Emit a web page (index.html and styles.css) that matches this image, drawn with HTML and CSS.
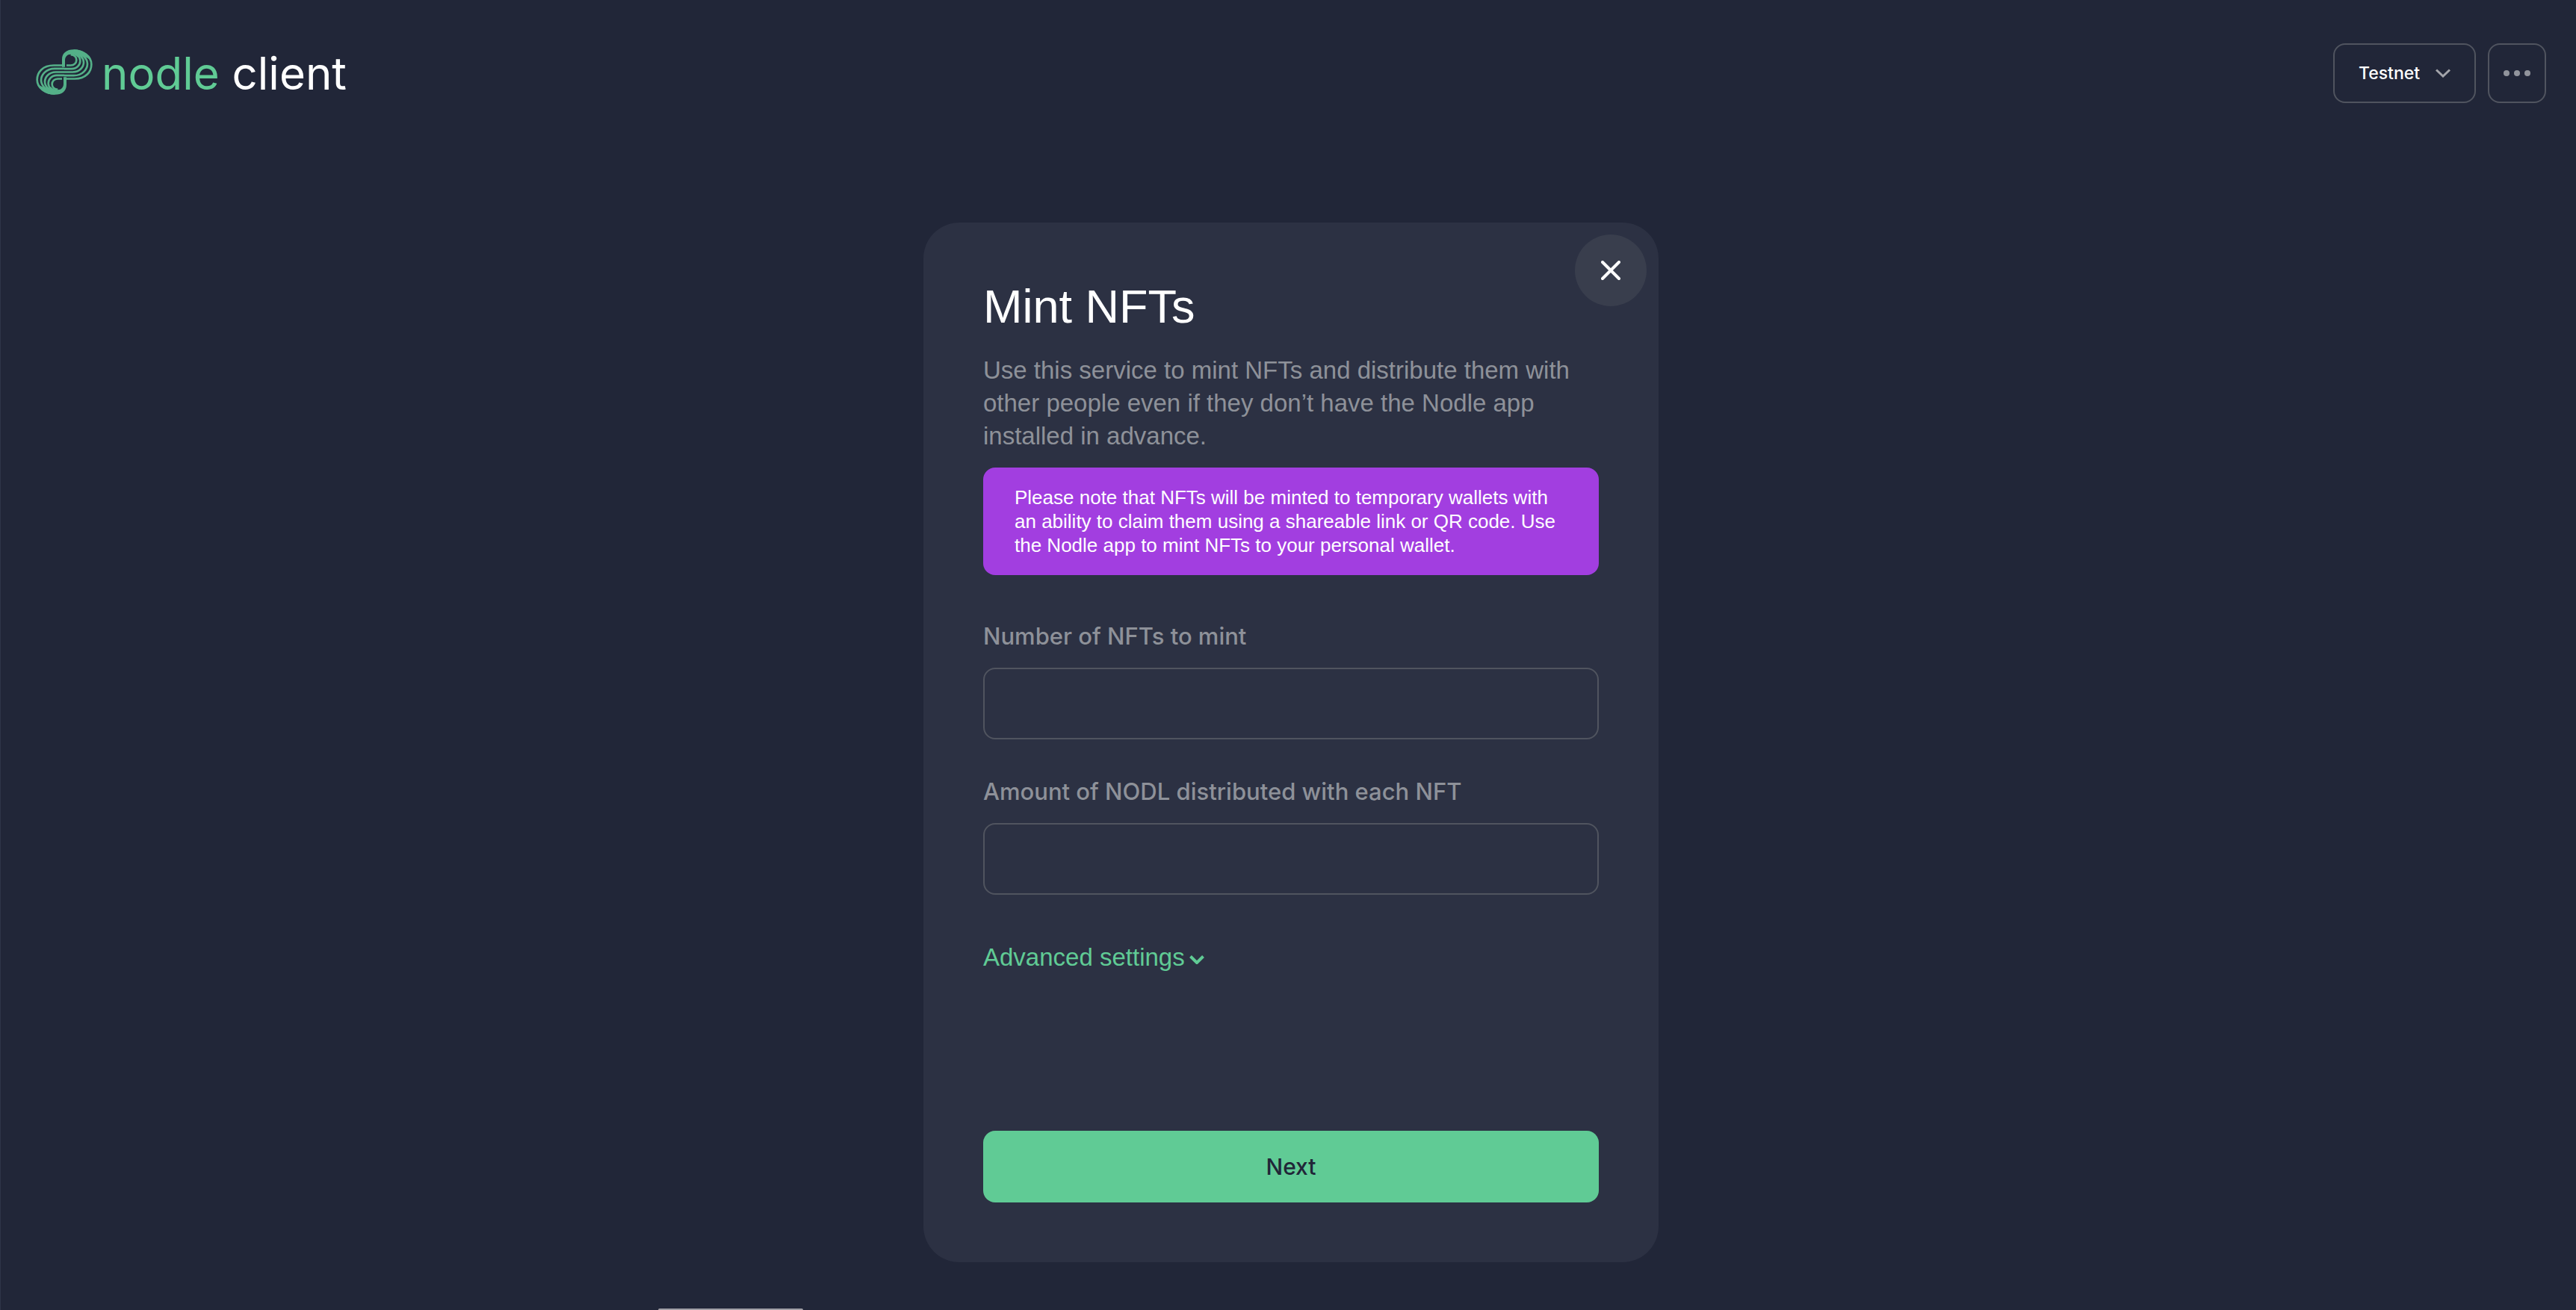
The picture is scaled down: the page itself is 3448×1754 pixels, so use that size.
FILE: index.html
```
<!DOCTYPE html>
<html lang="en">
<head>
<meta charset="utf-8">
<meta name="viewport" content="width=device-width, initial-scale=1">
<title>Nodle Client – Mint NFTs</title>
<link rel="stylesheet" href="styles.css">
</head>
<body>
<header class="header">
  <a class="brand" href="#">
    <svg class="brand-mark" viewBox="54 46 228 182" aria-hidden="true">
      <defs>
        <g id="loop">
          <path fill="currentColor" d="M159 117V86C159 60 178 46 206 46C242 46 268 66 276 92C262 78 242 68 222 78C214 70 206 66 194 66C180 66 171 76 171 90V117Z"/>
          <g fill="none" stroke="currentColor" stroke-width="8">
            <path d="M177 110H194C208 110 217 100 217 88C217 76 207 68 194 67"/>
            <path d="M168 124H198C220 124 232 107 232 92C232 77 218 62 200 58"/>
            <path d="M168 137H202C230 137 246 116 246 98C246 80 227 60 205 55"/>
            <path d="M168 151H206C243 151 261 124 261 104C261 82 237 60 208 52"/>
            <path d="M177 164H210C255 164 277 136 277 106C277 72 242 50 206 50"/>
          </g>
        </g>
      </defs>
      <use href="#loop"/>
      <use href="#loop" transform="rotate(180 168 137)"/>
    </svg>
    <span class="brand-name">nodle <span class="brand-product">client</span></span>
  </a>
  <div class="toolbar">
    <div class="network">
      <select class="network-select" aria-label="Network">
        <option>Testnet</option>
      </select>
      <svg class="network-chevron" viewBox="0 0 20 12" aria-hidden="true"><path d="M1 1.500L10 10L19 1.500" fill="none" stroke="currentColor" stroke-width="3"/></svg>
    </div>
    <button class="more" type="button" aria-label="More options">
      <svg class="more-icon" viewBox="0 0 36 8" aria-hidden="true"><g fill="currentColor"><circle cx="4" cy="4" r="4"/><circle cx="18" cy="4" r="4"/><circle cx="32" cy="4" r="4"/></g></svg>
    </button>
  </div>
</header>
<main class="main">
  <form class="card">
    <button class="close" type="button" aria-label="Close">
      <svg class="close-icon" viewBox="0 0 26 26" aria-hidden="true"><path d="M2 2L24 24M24 2L2 24" stroke="currentColor" stroke-width="4" stroke-linecap="round"/></svg>
    </button>
    <h1 class="title">Mint NFTs</h1>
    <p class="intro">Use this service to mint NFTs and distribute them with other people even if they don’t have the Nodle app installed in advance.</p>
    <p class="note">Please note that NFTs will be minted to temporary wallets with an ability to claim them using a shareable link or QR code. Use the Nodle app to mint NFTs to your personal wallet.</p>
    <div class="fields">
      <div class="field">
        <label class="label" for="count">Number of NFTs to mint</label>
        <input class="input" id="count" type="text" inputmode="numeric">
      </div>
      <div class="field">
        <label class="label" for="amount">Amount of NODL distributed with each NFT</label>
        <input class="input" id="amount" type="text" inputmode="decimal">
      </div>
    </div>
    <button class="advanced" type="button">Advanced settings
      <svg class="advanced-chevron" viewBox="0 0 20 12" aria-hidden="true"><path d="M1.500 1.500L10 10L18.500 1.500" fill="none" stroke="currentColor" stroke-width="4"/></svg>
    </button>
    <button class="next" type="submit">Next</button>
  </form>
</main>
<div class="handle"></div>
</body>
</html>
```
FILE: styles.css
```
:root {
  --bg: #212638;
  --surface: #2c3143;
  --border: #50545f;
  --muted: #8e9199;
  --green: #60cb95;
  --sans: "Liberation Sans", Arial, sans-serif;
  --ui: Inter, "Liberation Sans", sans-serif;
}

* { box-sizing: border-box; }

body {
  display: flex;
  flex-direction: column;
  min-height: 100vh;
  margin: 0;
  padding-left: 7px;
  border-left: 1px solid #2f3548;
  background: var(--bg);
  color: #fff;
  font-family: var(--sans);
}

button, select, input { margin: 0; font: inherit; color: inherit; }
button { cursor: pointer; }
svg { display: block; }

.header {
  display: flex;
  align-items: center;
  justify-content: space-between;
  padding: 58px 40px 0;
}

.brand {
  display: flex;
  align-items: center;
  gap: 12px;
  color: var(--green);
  text-decoration: none;
}
.brand-mark { width: 76px; height: 61px; margin-bottom: 4px; color: #54b088; }
.brand-name { font: 400 60px/80px var(--ui); }
.brand-product { color: #fff; }

.toolbar { display: flex; gap: 16px; }

.network { display: grid; align-items: center; }
.network-select,
.more {
  height: 80px;
  border: 2px solid var(--border);
  border-radius: 16px;
  background: none;
}
.network-select {
  grid-area: 1 / 1;
  width: 191px;
  padding: 0 32px;
  appearance: none;
  font: 500 23px/32px var(--ui);
}
.network-chevron {
  grid-area: 1 / 1;
  justify-self: end;
  width: 20px;
  height: 12px;
  margin-right: 34px;
  color: #a3a4aa;
  pointer-events: none;
}
.more {
  display: flex;
  align-items: center;
  justify-content: center;
  width: 78px;
  padding: 0;
  color: #91949c;
}
.more-icon { width: 36px; height: 8px; }

.main {
  display: flex;
  justify-content: center;
  padding: 160px 0 60px;
}

.card {
  position: relative;
  display: flex;
  flex-direction: column;
  width: 100%;
  max-width: 984px;
  padding: 80px;
  border-radius: 48px;
  background: var(--surface);
}

.close {
  position: absolute;
  top: 16px;
  right: 16px;
  display: flex;
  align-items: center;
  justify-content: center;
  width: 96px;
  height: 96px;
  padding: 0;
  border: 0;
  border-radius: 50%;
  background: #393e4d;
}
.close-icon { width: 26px; height: 26px; }

.title { margin: 0; font: 400 63px/64px var(--sans); }

.intro {
  margin: 32px 0 20px;
  color: var(--muted);
  font-size: 33px;
  line-height: 44px;
}

.note {
  margin: 0 0 60px;
  padding: 24px 42px;
  border-radius: 16px;
  background: #a23ee0;
  font-size: 26px;
  line-height: 32px;
}

.fields { display: flex; flex-direction: column; gap: 48px; }
.field { display: flex; flex-direction: column; gap: 20px; }
.label { color: var(--muted); font: 500 31px/44px var(--ui); }
.input {
  width: 100%;
  height: 96px;
  padding: 0 32px;
  border: 2px solid var(--border);
  border-radius: 16px;
  background: none;
  font-size: 33px;
}

.advanced {
  display: flex;
  align-items: center;
  align-self: flex-start;
  gap: 6px;
  margin: 62px 0 210px;
  padding: 0;
  border: 0;
  background: none;
  color: var(--green);
  font-size: 33px;
  line-height: 44px;
}
.advanced-chevron { width: 20px; height: 12px; margin-top: 6px; }

.next {
  height: 96px;
  border: 0;
  border-radius: 16px;
  background: var(--green);
  color: var(--bg);
  font: 500 30px/44px var(--ui);
}

.handle {
  width: 194px;
  height: 2px;
  margin: auto 0 0 873px;
  border-radius: 2px 2px 0 0;
  background: #a09fa6;
}
```
